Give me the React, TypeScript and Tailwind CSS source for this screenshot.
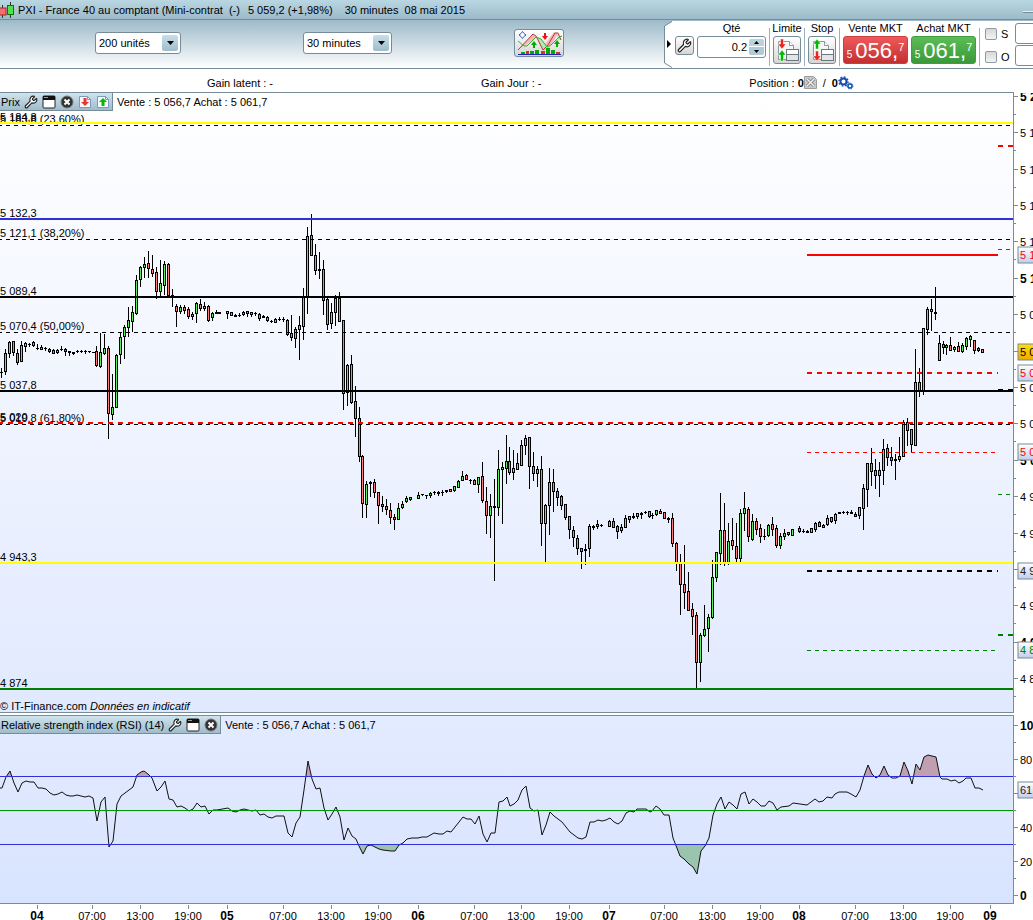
import type { ReactNode } from "react";
import { Wrench } from "lucide-react";
import clsx from "clsx";

type Kind = "u" | "d" | "n";
// x, high, body top, body bottom, low, kind (up / down / neutral)
type Candle = [number, number, number, number, number, Kind];

const PRICE_TOP = 93;
const PRICE_HEIGHT = 619;
const RSI_TOP = 716;
const RSI_HEIGHT = 187;

const candles: Candle[] = [
  [1, 368, 372, 372, 377, "n"], [5, 349, 353, 371, 374, "u"], [9, 341, 342, 353, 357, "u"], [13, 341, 341, 352, 355, "d"],
  [17, 349, 353, 362, 364, "d"], [21, 341, 345, 361, 361, "u"], [25, 342, 343, 346, 351, "u"], [29, 343, 344, 344, 346, "n"],
  [33, 341, 342, 345, 346, "u"], [37, 344, 348, 348, 349, "n"], [41, 345, 347, 349, 349, "u"], [45, 347, 348, 348, 350, "n"],
  [49, 348, 349, 351, 352, "d"], [53, 349, 350, 353, 353, "d"], [57, 349, 350, 352, 353, "u"], [61, 346, 349, 349, 350, "n"],
  [65, 348, 349, 351, 355, "d"], [69, 351, 351, 352, 355, "n"], [73, 352, 352, 353, 354, "n"], [77, 350, 351, 351, 352, "n"],
  [81, 350, 351, 351, 352, "n"], [85, 350, 351, 351, 353, "n"], [89, 351, 351, 351, 352, "n"], [93, 352, 352, 352, 352, "n"],
  [96, 346, 351, 365, 366, "d"], [100, 333, 352, 366, 367, "u"], [104, 334, 348, 353, 354, "u"], [108, 346, 348, 413, 438, "d"],
  [112, 374, 407, 414, 419, "u"], [116, 354, 355, 407, 407, "u"], [120, 333, 337, 354, 363, "u"], [124, 325, 327, 336, 358, "u"],
  [128, 307, 320, 327, 336, "u"], [132, 306, 312, 321, 331, "u"], [136, 275, 280, 313, 314, "u"], [140, 266, 267, 279, 286, "u"],
  [144, 257, 264, 267, 277, "u"], [148, 251, 263, 268, 277, "d"], [152, 255, 269, 273, 276, "d"], [156, 267, 272, 291, 298, "d"],
  [160, 260, 283, 291, 296, "u"], [164, 261, 264, 285, 294, "u"], [168, 263, 264, 295, 296, "d"], [172, 289, 295, 296, 306, "n"],
  [176, 304, 306, 311, 326, "d"], [180, 305, 307, 311, 313, "u"], [184, 305, 307, 310, 313, "d"], [188, 307, 309, 316, 318, "d"],
  [192, 312, 314, 316, 319, "u"], [196, 302, 303, 313, 322, "u"], [200, 299, 304, 308, 310, "d"], [204, 302, 306, 308, 310, "u"],
  [208, 305, 306, 320, 321, "d"], [212, 312, 313, 317, 320, "u"], [216, 310, 312, 313, 313, "n"], [219, 312, 312, 313, 313, "n"],
  [227, 311, 311, 313, 318, "u"], [231, 312, 312, 315, 315, "d"], [235, 314, 315, 316, 316, "n"], [239, 313, 315, 315, 316, "n"],
  [243, 311, 312, 314, 315, "u"], [247, 311, 311, 313, 316, "d"], [251, 312, 312, 314, 316, "d"], [255, 312, 313, 313, 315, "n"],
  [259, 313, 314, 318, 320, "d"], [263, 315, 316, 317, 317, "n"], [267, 316, 317, 320, 321, "d"], [271, 320, 321, 321, 322, "n"],
  [275, 318, 319, 322, 322, "u"], [279, 317, 319, 319, 320, "n"], [283, 317, 319, 319, 321, "n"], [287, 319, 320, 334, 335, "d"],
  [291, 315, 333, 337, 340, "d"], [295, 327, 329, 338, 347, "u"], [299, 316, 325, 329, 359, "u"], [303, 288, 297, 326, 339, "u"],
  [307, 227, 236, 297, 313, "u"], [311, 214, 235, 255, 255, "d"], [315, 244, 255, 270, 274, "d"], [319, 252, 269, 270, 278, "n"],
  [323, 260, 269, 300, 314, "d"], [327, 297, 299, 324, 329, "d"], [331, 303, 312, 323, 328, "u"], [335, 295, 298, 312, 325, "u"],
  [339, 292, 298, 321, 321, "d"], [343, 320, 320, 393, 409, "d"], [347, 364, 365, 392, 405, "u"], [351, 355, 364, 402, 403, "d"],
  [355, 386, 401, 418, 436, "d"], [359, 407, 418, 456, 461, "d"], [362, 455, 456, 503, 517, "d"], [366, 481, 484, 504, 517, "u"],
  [370, 481, 482, 483, 496, "n"], [374, 479, 482, 492, 497, "d"], [378, 492, 492, 505, 523, "d"], [382, 496, 504, 506, 511, "d"],
  [386, 499, 506, 509, 514, "d"], [390, 503, 510, 517, 523, "d"], [394, 514, 517, 519, 529, "d"], [398, 503, 508, 519, 519, "u"],
  [402, 501, 504, 507, 508, "u"], [406, 496, 498, 501, 502, "u"], [410, 497, 497, 499, 500, "u"], [418, 492, 495, 498, 498, "u"],
  [422, 494, 494, 494, 495, "n"], [426, 495, 495, 495, 498, "n"], [430, 492, 493, 495, 497, "u"], [434, 491, 492, 492, 494, "n"],
  [438, 491, 492, 493, 495, "n"], [442, 490, 492, 492, 495, "n"], [446, 490, 490, 491, 492, "n"], [450, 489, 489, 491, 491, "d"],
  [454, 486, 486, 490, 491, "u"], [458, 480, 481, 487, 487, "u"], [462, 471, 476, 480, 480, "u"], [466, 474, 475, 479, 479, "d"],
  [470, 479, 480, 480, 483, "n"], [474, 479, 480, 484, 484, "d"], [478, 477, 477, 484, 492, "u"], [482, 462, 476, 500, 502, "d"],
  [486, 487, 501, 515, 533, "d"], [490, 494, 506, 515, 537, "u"], [494, 479, 506, 507, 580, "n"], [498, 450, 469, 507, 515, "u"],
  [502, 462, 467, 469, 523, "u"], [506, 435, 461, 468, 483, "u"], [509, 447, 461, 472, 474, "d"], [513, 450, 468, 472, 479, "u"],
  [517, 453, 463, 469, 469, "u"], [521, 440, 445, 465, 465, "u"], [525, 435, 438, 445, 454, "u"], [529, 437, 437, 466, 488, "d"],
  [533, 452, 466, 473, 480, "d"], [537, 466, 469, 473, 486, "u"], [541, 456, 469, 523, 545, "d"], [545, 504, 505, 523, 561, "u"],
  [549, 468, 482, 505, 534, "u"], [553, 469, 482, 491, 511, "d"], [557, 488, 491, 497, 505, "d"], [561, 495, 496, 505, 509, "d"],
  [565, 504, 504, 517, 519, "d"], [569, 516, 516, 529, 538, "d"], [573, 526, 530, 537, 546, "d"], [577, 535, 538, 548, 554, "d"],
  [581, 548, 548, 551, 568, "d"], [585, 544, 549, 550, 564, "n"], [589, 524, 526, 548, 556, "u"], [593, 525, 526, 527, 529, "n"],
  [597, 520, 524, 526, 528, "u"], [601, 524, 525, 525, 526, "n"], [609, 520, 521, 526, 526, "u"], [613, 518, 521, 527, 527, "d"],
  [617, 525, 526, 531, 538, "d"], [621, 524, 527, 530, 532, "u"], [625, 515, 518, 527, 527, "u"], [629, 516, 516, 519, 522, "u"],
  [633, 513, 516, 517, 518, "n"], [637, 513, 513, 516, 518, "u"], [641, 512, 513, 514, 518, "n"], [645, 511, 512, 512, 513, "n"],
  [649, 511, 511, 516, 517, "d"], [652, 513, 515, 515, 518, "n"], [656, 510, 510, 514, 515, "u"], [660, 509, 511, 513, 513, "d"],
  [664, 512, 512, 518, 518, "d"], [668, 517, 518, 519, 522, "n"], [672, 513, 518, 543, 546, "d"], [676, 542, 543, 562, 570, "d"],
  [680, 554, 562, 584, 614, "d"], [684, 545, 584, 592, 608, "d"], [688, 572, 591, 610, 610, "d"], [692, 603, 609, 616, 634, "d"],
  [696, 612, 615, 662, 688, "d"], [700, 633, 635, 662, 681, "u"], [704, 605, 629, 635, 636, "u"], [708, 614, 617, 628, 651, "u"],
  [712, 560, 577, 617, 618, "u"], [716, 552, 552, 577, 581, "u"], [720, 493, 530, 553, 564, "u"], [724, 503, 530, 562, 565, "d"],
  [728, 523, 541, 562, 564, "u"], [732, 518, 540, 545, 549, "d"], [736, 523, 546, 558, 562, "d"], [740, 509, 513, 558, 562, "u"],
  [744, 492, 508, 513, 530, "u"], [748, 507, 509, 536, 541, "d"], [752, 514, 521, 539, 540, "u"], [756, 518, 521, 529, 534, "d"],
  [760, 524, 528, 536, 542, "d"], [764, 529, 536, 536, 539, "n"], [768, 524, 525, 535, 536, "u"], [772, 517, 524, 529, 535, "d"],
  [776, 525, 528, 545, 547, "d"], [780, 533, 536, 545, 548, "u"], [784, 529, 533, 536, 539, "u"], [788, 532, 532, 534, 535, "d"],
  [792, 529, 529, 535, 535, "u"], [799, 526, 528, 531, 532, "d"], [803, 529, 531, 531, 532, "n"], [807, 530, 531, 532, 532, "n"],
  [811, 528, 528, 532, 532, "u"], [815, 522, 523, 529, 531, "u"], [819, 521, 522, 526, 526, "d"], [823, 524, 525, 527, 527, "u"],
  [827, 515, 518, 524, 525, "u"], [831, 517, 517, 521, 522, "d"], [835, 513, 514, 520, 523, "u"], [839, 512, 512, 513, 513, "n"],
  [843, 511, 512, 512, 513, "n"], [847, 511, 512, 512, 514, "n"], [851, 510, 512, 513, 513, "n"], [855, 512, 514, 516, 516, "d"],
  [859, 507, 507, 515, 518, "u"], [863, 484, 488, 508, 529, "u"], [867, 463, 463, 489, 506, "u"], [871, 448, 463, 471, 485, "d"],
  [875, 459, 470, 475, 488, "d"], [879, 462, 470, 475, 496, "u"], [883, 439, 449, 470, 484, "u"], [887, 444, 448, 457, 465, "d"],
  [891, 447, 457, 460, 465, "d"], [895, 454, 459, 460, 479, "n"], [899, 437, 456, 459, 461, "u"], [903, 420, 422, 456, 456, "u"],
  [907, 418, 422, 430, 445, "d"], [911, 429, 429, 444, 451, "d"], [915, 349, 382, 445, 445, "u"], [919, 368, 382, 390, 396, "d"],
  [923, 328, 328, 390, 394, "u"], [927, 307, 309, 329, 334, "u"], [931, 299, 309, 311, 330, "d"], [935, 287, 312, 313, 319, "n"],
  [939, 335, 343, 360, 360, "u"], [943, 341, 344, 347, 353, "d"], [946, 344, 345, 347, 354, "u"], [950, 337, 345, 350, 350, "d"],
  [954, 346, 347, 349, 351, "u"], [958, 342, 346, 351, 351, "d"], [962, 343, 345, 351, 352, "u"], [966, 337, 338, 346, 349, "u"],
  [970, 335, 336, 339, 346, "u"], [974, 340, 340, 350, 353, "d"], [978, 347, 348, 350, 351, "d"], [982, 349, 349, 352, 352, "d"],
];

const rsi =
  "0,788 2,788 6,777 10,771 14,783 18,792 22,783 26,781 30,782 34,782 38,788 42,788 46,789 50,793 54,795 58,794 62,792 66,795 70,796 73,796 77,795 81,796 85,797 89,796 93,798 97,821 101,802 105,797 109,847 113,841 117,804 121,796 125,793 129,790 133,787 137,775 141,772 144,771 148,774 152,778 157,791 161,787 165,781 169,799 173,800 177,807 181,806 185,808 189,811 193,809 197,803 201,807 205,806 209,814 213,810 217,810 228,808 232,811 236,812 240,810 244,809 252,811 256,810 260,815 264,814 268,817 272,818 276,816 284,816 288,833 292,837 296,823 300,817 304,790 308,761 312,779 316,789 320,788 324,808 328,820 332,814 336,807 340,817 344,840 348,828 352,836 356,839 359,846 363,854 367,846 371,845 375,847 379,849 383,850 391,851 395,851 399,845 403,843 407,839 412,838 418,838 422,837 427,837 434,833 439,834 443,834 447,831 451,832 463,817 467,819 471,819 475,824 479,816 483,834 487,842 491,833 495,833 499,802 503,801 507,797 510,806 514,804 518,800 522,790 526,786 530,808 534,811 538,810 542,835 546,825 550,812 554,816 558,819 562,822 570,832 574,835 578,838 582,839 586,837 590,822 594,822 598,820 602,821 606,820 610,818 614,822 618,824 622,821 626,813 630,811 634,812 637,809 642,809 646,809 650,812 652,811 656,806 660,809 664,815 669,815 673,838 680,856 684,859 689,864 693,867 697,874 701,851 705,846 709,838 713,815 717,804 721,797 725,809 729,802 733,805 737,809 741,794 745,792 749,804 753,799 757,802 761,806 765,806 769,801 773,803 777,810 781,807 789,806 793,803 807,805 815,799 819,802 823,801 827,797 832,798 835,794 839,792 847,792 851,794 856,797 860,790 864,776 868,765 872,774 876,778 880,775 884,766 888,775 892,778 896,778 900,776 904,762 908,771 912,784 916,764 920,770 924,757 928,755 936,757 940,777 942,779 947,779 951,781 955,780 959,783 963,781 966,778 971,778 975,788 979,788 983,790";

interface Level {
  y: number;
  h: number;
  color: string;
  from?: number;
  to?: number;
  dash?: string;
  offset?: number;
}

const THIN = "4 4";
const THICK = "5 5";

const levels: Level[] = [
  { y: 122, h: 2, color: "#ffff00" },
  { y: 125, h: 1, color: "#000", dash: THIN, offset: 2 },
  { y: 145, h: 2, color: "#f00", dash: THICK, from: 998 },
  { y: 218, h: 2, color: "#3030d8" },
  { y: 239, h: 1, color: "#000", dash: THIN, offset: 2 },
  { y: 249, h: 1, color: "#f00", dash: THIN, from: 998 },
  { y: 254, h: 2, color: "#f00", from: 807, to: 998 },
  { y: 296, h: 2, color: "#000" },
  { y: 332, h: 1, color: "#000", dash: THIN, offset: 2 },
  { y: 372, h: 2, color: "#f00", dash: THICK, from: 807, to: 998 },
  { y: 390, h: 2, color: "#000" },
  { y: 389, h: 2, color: "#000", dash: THICK, from: 998 },
  { y: 424, h: 1, color: "#000", dash: THIN, offset: 2 },
  { y: 422, h: 2, color: "#f00", dash: THICK, offset: 2 },
  { y: 452, h: 1, color: "#f00", dash: THIN, from: 807, to: 998 },
  { y: 494, h: 1, color: "#008000", dash: THIN, from: 998 },
  { y: 562, h: 2, color: "#ffff00" },
  { y: 570, h: 2, color: "#000", dash: THICK, from: 807, to: 998 },
  { y: 634, h: 2, color: "#008000", dash: THICK, from: 998 },
  { y: 650, h: 1, color: "#008000", dash: THIN, from: 807, to: 998 },
  { y: 688, h: 2, color: "#008000" },
];

const levelLabels = [
  { y: 121, text: "5 184,8" },
  { y: 123, text: "5 183,8 (23,60%)" },
  { y: 217, text: "5 132,3" },
  { y: 237, text: "5 121,1 (38,20%)" },
  { y: 295, text: "5 089,4" },
  { y: 330, text: "5 070,4 (50,00%)" },
  { y: 389, text: "5 037,8" },
  { y: 421, text: "5 020" },
  { y: 422, text: "5 019,8 (61,80%)" },
  { y: 561, text: "4 943,3" },
  { y: 687, text: "4 874" },
];

const priceTicks = [
  { y: 96, text: "5 200", bold: true },
  { y: 132, text: "5 180" },
  { y: 169, text: "5 160" },
  { y: 205, text: "5 140" },
  { y: 241, text: "5 120" },
  { y: 278, text: "5 100", bold: true },
  { y: 314, text: "5 080" },
  { y: 351, text: "5 060" },
  { y: 387, text: "5 040" },
  { y: 423, text: "5 020" },
  { y: 460, text: "5 000", bold: true },
  { y: 496, text: "4 980" },
  { y: 533, text: "4 960" },
  { y: 569, text: "4 940" },
  { y: 605, text: "4 920" },
  { y: 642, text: "4 900", bold: true },
  { y: 678, text: "4 880" },
];

const priceTags = [
  { y: 255, text: "5 112,5", color: "#f00" },
  { y: 352, text: "5 059,2", color: "#000", gold: true },
  { y: 373, text: "5 047,6", color: "#f00" },
  { y: 452, text: "5 004,2", color: "#f00" },
  { y: 571, text: "4 938,9", color: "#222" },
  { y: 650, text: "4 895,4", color: "#008000" },
];

const rsiTicks = [
  { y: 725, text: "100", bold: true },
  { y: 759, text: "80" },
  { y: 793, text: "60" },
  { y: 827, text: "40" },
  { y: 861, text: "20" },
  { y: 895, text: "0", bold: true },
];

const timeTicks = [
  { x: 37, text: "04", day: true }, { x: 92, text: "07:00" }, { x: 140, text: "13:00" }, { x: 188, text: "19:00" },
  { x: 227, text: "05", day: true }, { x: 283, text: "07:00" }, { x: 331, text: "13:00" }, { x: 378, text: "19:00" },
  { x: 418, text: "06", day: true }, { x: 474, text: "07:00" }, { x: 521, text: "13:00" }, { x: 569, text: "19:00" },
  { x: 609, text: "07", day: true }, { x: 664, text: "07:00" }, { x: 712, text: "13:00" }, { x: 760, text: "19:00" },
  { x: 799, text: "08", day: true }, { x: 855, text: "07:00" }, { x: 903, text: "13:00" }, { x: 950, text: "19:00" },
  { x: 990, text: "09", day: true },
];

const fills: Record<Kind, string> = { u: "#5cf05c", d: "#ff7c7c", n: "#000" };

const LevelLine = ({ y, h, color, from = 0, to, dash, offset = 0 }: Level) => (
  <line
    x1={from}
    x2={to ?? "100%"}
    y1={y + h / 2}
    y2={y + h / 2}
    stroke={color}
    strokeWidth={h}
    strokeDasharray={dash}
    strokeDashoffset={offset}
  />
);

const PriceChart = () => (
  <svg className="block w-full h-[619px]" role="img" aria-label="Prix">
    <g transform={`translate(0 ${-PRICE_TOP})`}>
      {levelLabels.map((l) => (
        <text key={l.text} x={0} y={l.y} fontSize={11} fill="#000">
          {l.text}
        </text>
      ))}
      <text x={0} y={710} fontSize={11}>© IT-Finance.com</text>
      <text x={90} y={710} fontSize={11} fontStyle="italic">Données en indicatif</text>
      <g shapeRendering="crispEdges">
        {candles.map(([x, high, top, bottom, low, kind]) => (
          <g key={x}>
            <rect x={x} y={high} width={1} height={low - high + 1} fill="#000" />
            <rect x={x - 1} y={top} width={3} height={bottom - top + 1} fill="#000" />
            {kind !== "n" && bottom - top > 1 && (
              <rect x={x} y={top + 1} width={1} height={bottom - top - 1} fill={fills[kind]} />
            )}
          </g>
        ))}
        {levels.map((l) => <LevelLine key={`${l.y}-${l.from}`} {...l} />)}
      </g>
    </g>
  </svg>
);

const RsiChart = () => (
  <svg className="block w-full h-[187px]" role="img" aria-label="Relative strength index">
    <defs>
      <clipPath id="overbought"><rect x={0} y={RSI_TOP} width="100%" height={776 - RSI_TOP} /></clipPath>
      <clipPath id="oversold"><rect x={0} y={844} width="100%" height={59} /></clipPath>
    </defs>
    <g transform={`translate(0 ${-RSI_TOP})`}>
      <polygon points={`0,776 ${rsi} 983,776`} fill="#c0a0b0" clipPath="url(#overbought)" />
      <polygon points={`0,844 ${rsi} 983,844`} fill="#9ac4ae" clipPath="url(#oversold)" />
      <polyline points={rsi} fill="none" stroke="#111" strokeWidth={1} />
      <g shapeRendering="crispEdges">
        <LevelLine y={776} h={1} color="#3030d8" />
        <LevelLine y={810} h={1} color="#009600" />
        <LevelLine y={844} h={1} color="#3030d8" />
      </g>
    </g>
  </svg>
);

interface AxisProps {
  id: string;
  top: number;
  height: number;
  ticks: { y: number; text: string; bold?: boolean }[];
  tags: { y: number; text: string; color: string; gold?: boolean }[];
}

const ValueAxis = ({ id, top, height, ticks, tags }: AxisProps) => {
  const step = (ticks[1].y - ticks[0].y) / 2;

  return (
    <svg className="block w-full" height={height}>
      <defs>
        <linearGradient id={`${id}-tag`} x1="0" y1="0" x2="0" y2="1">
          <stop offset="0" stopColor="#fff" />
          <stop offset="1" stopColor="#c2cdea" />
        </linearGradient>
        <linearGradient id={`${id}-gold`} x1="0" y1="0" x2="0" y2="1">
          <stop offset="0" stopColor="#ffe000" />
          <stop offset="1" stopColor="#eda800" />
        </linearGradient>
      </defs>
      <g transform={`translate(0 ${-top})`}>
        {ticks.map((t) => (
          <g key={t.text}>
            <rect x={0} y={t.y} width={4} height={1} fill="#768c98" />
            <rect x={0} y={Math.round(t.y + step)} width={2} height={1} fill="#768c98" />
            <text x={6} y={t.y + 5} fontSize={t.bold ? 12 : 11} fontWeight={t.bold ? 700 : 400}>
              {t.text}
            </text>
          </g>
        ))}
        {tags.map((t) => (
          <g key={t.y}>
            <rect
              x={4} y={t.y - 8} width={60} height={16}
              fill={`url(#${id}-${t.gold ? "gold" : "tag"})`} stroke="#768c98"
            />
            <text x={6} y={t.y + 4} fontSize={11} fill={t.color}>{t.text}</text>
          </g>
        ))}
      </g>
    </svg>
  );
};

const WindowIcon = () => (
  <svg width="14" height="14" viewBox="0 0 14 14">
    <rect x="1" y="1" width="12" height="12" rx="1" fill="#fff" stroke="#222" />
    <rect x="1" y="1" width="12" height="4" fill="#111" />
    <rect x="2" y="2" width="4" height="1" fill="#999" />
  </svg>
);

const CloseIcon = () => (
  <svg width="14" height="14" viewBox="0 0 14 14">
    <circle cx="7" cy="7" r="6" fill="#333" stroke="#777" />
    <path d="M4.5 4.5l5 5M9.5 4.5l-5 5" stroke="#fff" strokeWidth="2" />
  </svg>
);

const PageArrowIcon = ({ up }: { up?: boolean }) => (
  <svg width="14" height="14" viewBox="0 0 14 14">
    <path d="M1.5 1.5h8l3 3v8h-11z" fill="#f6f9fc" stroke="#7d9ab8" />
    <path d="M9.5 1.5v3h3" fill="none" stroke="#7d9ab8" />
    {up ? (
      <path d="M7 3l4 4H8.5v4h-3V7H3z" fill="#0b0" />
    ) : (
      <path d="M7 11l4-4H8.5V3h-3v4H3z" fill="#e33" />
    )}
  </svg>
);

const WrenchIcon = ({ size = 14 }: { size?: number }) => (
  <Wrench size={size} fill="#fff" stroke="#222" strokeWidth={2} />
);

const OrderIcon = ({ stop }: { stop?: boolean }) => (
  <svg width="24" height="24" viewBox="0 0 24 24">
    <path d="M3.5 3.5h11l4 4v14h-15z" fill="#f6f6f6" stroke="#8a9aa4" />
    <path d="M14.5 3.5v4h4" fill="#fff" stroke="#8a9aa4" />
    <rect x="11.5" y="11.5" width="12" height="5" fill="#fff" stroke="#6a7882" />
    <rect x="11.5" y="16.5" width="12" height="6" fill="#e4e4e4" stroke="#6a7882" />
    <path
      d={stop ? "M7 1l4 5H8.5v5h-3V6H3z" : "M7 11l4-5H8.5V1h-3v5H3z"}
      fill={stop ? "#0b0" : "#e22"} stroke="#fff" strokeWidth="0.5"
    />
    <path
      d={stop ? "M7 23l4-5H8.5v-5h-3v5H3z" : "M7 12l4 5H8.5v6h-3v-6H3z"}
      fill={stop ? "#e22" : "#0b0"} stroke="#fff" strokeWidth="0.5"
    />
  </svg>
);

const IndicatorsIcon = () => (
  <svg width="47" height="26" viewBox="0 0 47 26">
    <path d="M6 16L17 4l3 3-10 8-5 3zM29 14l9-12 4 2-9 14-6 3z" fill="#f3b8b8" />
    <path d="M20 6l6 4 5 6-4 4zM41 2l4 7-3 2z" fill="#b4e8b4" />
    <path d="M2 20L17 4l3 2 7 14 5-5 7-12 3 0 3 7" fill="none" stroke="#b83838" />
    <path d="M2 11l6 5 3 0 9-9 5 2 6 8 4-2 8-8 3-1" fill="none" stroke="#38b038" />
    <path d="M6.5 1.5l1.500 2 2 1.500-2 1.500-1.500 2-1.500-2-2-1.500 2-1.500z" fill="#fff" stroke="#2a5cb8" />
    <path d="M18 11l3 4h-2v3h-2v-3h-2zM41 10l3 4h-2v3h-2v-3h-2z" fill="#0a0" />
    <path d="M29 10l3-4h-2V3h-2v3h-2z" fill="#e11" />
    <path d="M5 22h4v2H5zM14 21h4v3h-4zM19 20h4v4h-4zM30 18h4v6h-4zM35 20h4v4h-4z" fill="#0a0" />
    <path d="M10 21h3v3h-3zM25 21h4v3h-4zM40 22h4v2h-4z" fill="#c33" />
    <rect x="2" y="24" width="43" height="1" fill="#2020c0" />
  </svg>
);

const CancelPageIcon = () => (
  <svg width="13" height="13" viewBox="0 0 13 13">
    <path d="M0.5 0.5h9l3 3v9h-12z" fill="#c9c9c9" stroke="#9c9c9c" />
    <path d="M3 3l7 7M10 3l-7 7" stroke="#777" strokeWidth="3" />
    <path d="M3 3l7 7M10 3l-7 7" stroke="#f2f2f2" strokeWidth="1.5" />
  </svg>
);

const GearsIcon = () => (
  <svg width="16" height="14" viewBox="0 0 16 14">
    <circle cx="5.5" cy="5.5" r="3" fill="none" stroke="#1450b4" strokeWidth="2" />
    <circle cx="5.5" cy="5.5" r="4.500" fill="none" stroke="#1450b4" strokeWidth="1.5" strokeDasharray="1.8 1.7" />
    <circle cx="12" cy="10" r="2" fill="none" stroke="#1450b4" strokeWidth="1.5" />
    <circle cx="12" cy="10" r="3" fill="none" stroke="#1450b4" strokeDasharray="1.3 1.3" />
  </svg>
);

const CandlesIcon = () => (
  <svg width="15" height="18" viewBox="0 0 15 18">
    <path d="M2.5 4v13M10.5 1v16" stroke="#333" />
    <rect x="-1" y="7" width="7" height="7" fill="#f07070" stroke="#b02020" />
    <rect x="7.5" y="4.5" width="6" height="9" fill="#50e050" stroke="#087808" />
  </svg>
);

const Picker = ({ label, options, className }: { label: string; options: string[]; className?: string }) => (
  <div className={clsx("relative h-[22px]", className)}>
    <select
      aria-label={label}
      className="appearance-none w-full h-full pl-[3px] rounded-[3px] border border-[#768c98] bg-white text-[11px]"
    >
      {options.map((o) => <option key={o}>{o}</option>)}
    </select>
    <span className="pointer-events-none absolute right-[3px] top-[3px] size-4 rounded-[2px] bg-linear-to-b from-[#c8dfe9] to-[#9fbccb] flex items-center justify-center">
      <svg width="7" height="4" viewBox="0 0 7 4"><path d="M0 0h7L3.5 4z" fill="#000" /></svg>
    </span>
  </div>
);

const Separator = () => <span className="w-px h-[38px] mt-[7px] bg-[#9db0bb]" />;

const IconButton = ({ label, className, children }: { label: string; className?: string; children: ReactNode }) => (
  <button
    aria-label={label}
    className={clsx(
      "flex items-center justify-center rounded-[3px] border border-[#768c98] bg-linear-to-b from-white to-[#d6d6d6]",
      className
    )}
  >
    {children}
  </button>
);

const QuoteButton = ({ label, big, pip, className }: { label: string; big: string; pip: string; className: string }) => (
  <div className="flex flex-col items-center w-[65px]">
    <span className="h-[15px] leading-[14px] whitespace-nowrap">{label}</span>
    <button
      aria-label={label}
      className={clsx("flex items-baseline justify-center w-full h-7 rounded-[3px] text-white leading-[27px]", className)}
    >
      <span className="text-[10px]">5</span>
      <span className="pl-[3px] text-[22px]">{big},</span>
      <span className="self-start text-[11px] leading-5">{pip}</span>
    </button>
  </div>
);

const TradingPanel = () => (
  <section className="flex shrink-0 h-[47px] overflow-hidden w-[370px]">
    <button aria-label="Replier" className="w-[9px] h-[47px] shrink-0">
      <svg width="9" height="47" viewBox="0 0 9 47">
        <path d="M9 0.5L1.5 5v37L9 46.5z" fill="#fff" />
        <path d="M9 0.5L1.5 5v37L9 46.5" fill="none" stroke="#768c98" />
        <path d="M4 19v8l4-4z" fill="#000" />
      </svg>
    </button>
    <div className="flex flex-1 bg-white pl-[3px]">
      <IconButton label="Réglages" className="w-[19px] h-[19px] mt-[15px] shrink-0"><WrenchIcon size={15} /></IconButton>
      <div className="flex flex-col items-center w-[69px] ml-[3px] shrink-0">
        <label htmlFor="qty" className="h-[15px] leading-[14px]">Qté</label>
        <div className="relative w-full h-[22px]">
          <input
            id="qty"
            defaultValue="0.2"
            className="w-full h-full pr-[18px] rounded-[3px] border border-[#768c98] bg-white text-right text-[11px]"
          />
          <div className="absolute right-[2px] top-[3px] flex flex-col w-[15px] rounded-[2px] overflow-hidden">
            <button aria-label="Augmenter" className="h-2 bg-[#b9d2de] border-b border-white flex items-center justify-center">
              <svg width="5" height="3" viewBox="0 0 5 3"><path d="M0 3h5L2.5 0z" fill="#000" /></svg>
            </button>
            <button aria-label="Diminuer" className="h-2 bg-[#b0cbd8] flex items-center justify-center">
              <svg width="5" height="3" viewBox="0 0 5 3"><path d="M0 0h5L2.5 3z" fill="#000" /></svg>
            </button>
          </div>
        </div>
      </div>
      <div className="flex flex-1 gap-[3px] ml-[3px]">
        <Separator />
        <div className="flex flex-col items-center w-7 shrink-0">
          <span className="h-[15px] leading-[14px]">Limite</span>
          <IconButton label="Limite" className="size-7"><OrderIcon /></IconButton>
        </div>
        <Separator />
        <div className="flex flex-col items-center w-7 shrink-0">
          <span className="h-[15px] leading-[14px]">Stop</span>
          <IconButton label="Stop" className="size-7"><OrderIcon stop /></IconButton>
        </div>
        <Separator />
        <QuoteButton label="Vente MKT" big="056" pip="7" className="bg-linear-to-b from-[#ee5a5a] to-[#c42e30] border border-[#c84040]" />
        <QuoteButton label="Achat MKT" big="061" pip="7" className="bg-linear-to-b from-[#5cbc56] to-[#3a9a3a] border border-[#3f9f3f]" />
        <Separator />
        <div className="flex flex-col gap-1 w-[27px] pt-[3px] ml-[2px] shrink-0">
          {["S", "O"].map((c) => (
            <label key={c} className="flex items-center gap-1 h-[19px]">
              <input type="checkbox" className="appearance-none size-3 rounded-[2px] border border-[#8c9ca6] bg-linear-to-b from-[#d8d8d8] to-[#f4f4f4]" />
              {c}
            </label>
          ))}
        </div>
        <div className="flex flex-col gap-px pt-[2px] flex-1 min-w-0">
          <input aria-label="Niveau stop" className="w-10 h-[21px] rounded-[3px] border border-[#768c98] bg-white" />
          <input aria-label="Niveau objectif" className="w-10 h-[21px] rounded-[3px] border border-[#768c98] bg-white" />
        </div>
      </div>
    </div>
  </section>
);

const PanelHeader = ({ title, children }: { title: string; children?: ReactNode }) => (
  <div className="absolute left-0 top-0 flex items-center h-[18px]">
    <div className="flex items-center gap-1 h-full pl-px pr-[2px] border-r border-b border-[#768c98] bg-linear-to-b from-[#cfe4ee] to-[#9fbccb]">
      <h2 className="whitespace-nowrap">{title}</h2>
      <button aria-label="Réglages"><WrenchIcon /></button>
      <button aria-label="Agrandir"><WindowIcon /></button>
      <button aria-label="Fermer"><CloseIcon /></button>
      {children}
    </div>
    <span className="pl-1 whitespace-nowrap">Vente : 5 056,7 Achat : 5 061,7</span>
  </div>
);

export default function App() {
  return (
    <div className="bg-white text-black text-[11px] leading-[14px] font-['Liberation_Sans',Arial,sans-serif] overflow-hidden">
      <header className="flex items-center h-5 border-b border-[#768c98] bg-linear-to-b from-[#b9d7e3] to-[#9dbac9] whitespace-pre">
        <CandlesIcon />
        <h1 className="pl-[3px]">PXI - France 40 au comptant (Mini-contrat  (-)</h1>
        <span className="pl-2">5 059,2 (+1,98%)</span>
        <span className="pl-3">30 minutes  08 mai 2015</span>
        <button aria-label="Réduire" className="ml-auto self-end mb-[6px] w-[10px] h-[2px] bg-[#e4eef3] border-b border-[#768c98]" />
      </header>

      <div className="flex h-[49px] pt-px border-b border-[#768c98] bg-linear-to-b from-[#9dbac9] to-white">
        <Picker label="Nombre d'unités" options={["200 unités"]} className="w-[86px] ml-[95px] mt-[11px]" />
        <Picker label="Unité de temps" options={["30 minutes"]} className="w-[89px] ml-[122px] mt-[11px]" />
        <IconButton label="Indicateurs" className="w-[50px] h-7 ml-[122px] mt-2 mr-auto shrink-0"><IndicatorsIcon /></IconButton>
        <TradingPanel />
      </div>

      <div className="flex items-center justify-between h-[23px] pt-1 pl-[207px] pr-[179px]">
        <span>Gain latent : -</span>
        <span>Gain Jour : -</span>
        <span className="flex items-center">
          Position :&nbsp;<b>0</b>
          <button aria-label="Fermer la position"><CancelPageIcon /></button>
          <span className="px-[6px]">/</span>
          <b>0</b>
          <button aria-label="Ordres"><GearsIcon /></button>
        </span>
      </div>

      <main className="bg-white">
        <section className="flex">
          <div className="relative flex-1 min-w-0 border-y border-r border-[#768c98] bg-linear-to-b from-white to-[#e1e9fe]">
            <PriceChart />
            <PanelHeader title="Prix">
              <button aria-label="Vendre"><PageArrowIcon /></button>
              <button aria-label="Acheter"><PageArrowIcon up /></button>
            </PanelHeader>
          </div>
          <div className="w-[19px] shrink-0 pt-px">
            <ValueAxis id="price" top={PRICE_TOP} height={PRICE_HEIGHT} ticks={priceTicks} tags={priceTags} />
          </div>
        </section>

        <section className="flex mt-[2px]">
          <div className="relative flex-1 min-w-0 border-y border-r border-[#768c98] bg-linear-to-b from-[#e3ebff] to-[#d8e3fe]">
            <RsiChart />
            <PanelHeader title="Relative strength index (RSI) (14)" />
          </div>
          <div className="w-[19px] shrink-0 pt-px">
            <ValueAxis
              id="rsi" top={RSI_TOP} height={RSI_HEIGHT} ticks={rsiTicks}
              tags={[{ y: 790, text: "61,9", color: "#222" }]}
            />
          </div>
        </section>

        <svg className="block w-full h-4" role="img" aria-label="Temps">
          {timeTicks.map((t) => (
            <g key={t.x}>
              <rect x={t.x} y={1} width={1} height={4} fill="#768c98" />
              <text x={t.x} y={16} textAnchor="middle" fontSize={t.day ? 12 : 11} fontWeight={t.day ? 700 : 400}>
                {t.text}
              </text>
            </g>
          ))}
        </svg>
      </main>
    </div>
  );
}
